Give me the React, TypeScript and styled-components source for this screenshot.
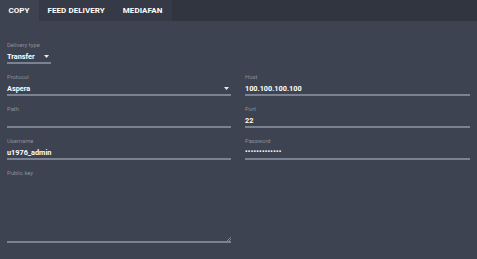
import React from "react";
import styled, { createGlobalStyle } from "styled-components";

const Global = createGlobalStyle`
  html, body { margin: 0; padding: 0; background: #3d4350; }
  body { font-family: Roboto, "Liberation Sans", sans-serif; width: 477px; height: 259px; overflow: hidden; }
`;

const Page = styled.div`
  width: 477px;
  height: 259px;
  background: #3d4350;
`;

const TabBar = styled.div`
  display: flex;
  height: 21px;
  background: #30353f;
`;

const Tab = styled.div<{ $active?: boolean }>`
  display: flex;
  align-items: center;
  padding: 0 9.5px 0 8.5px;
  background: ${(p) => (p.$active ? "#3d4350" : "#353a46")};
  color: #ffffff;
  font-size: 8px;
  font-weight: 700;
  letter-spacing: 0.05px;
`;

const Form = styled.div`
  display: grid;
  grid-template-columns: 224px 225px;
  column-gap: 14px;
  row-gap: 8px;
  padding: 19px 7px 0 7px;
`;

const Field = styled.div<{ $width?: number; $full?: boolean }>`
  display: flex;
  flex-direction: column;
  ${(p) => (p.$width ? `width: ${p.$width}px;` : "")}
  ${(p) => (p.$full ? "grid-column: 1 / span 2;" : "")}
`;

const Label = styled.div`
  height: 11px;
  line-height: 11px;
  font-size: 5.8px;
  color: #8a909b;
`;

const Value = styled.div`
  position: relative;
  height: 11px;
  line-height: 11px;
  font-size: 7.3px;
  font-weight: 700;
  color: #ffffff;
  border-bottom: 2px solid #7b8393;
  display: flex;
  align-items: center;
  justify-content: space-between;
`;

const Dots = styled.span`
  font-size: 7px;
  letter-spacing: 0.3px;
`;

const TextArea = styled.div`
  position: relative;
  height: 62px;
  width: 224px;
  border-bottom: 2px solid #7b8393;
`;

const Caret = styled.svg`
  width: 5px;
  height: 3px;
  margin-right: 2px;
  flex: none;
`;

const Resize = styled.svg`
  position: absolute;
  right: 0;
  bottom: 0;
  width: 4px;
  height: 4px;
`;

const Arrow = () => (
  <Caret viewBox="0 0 5 3">
    <path d="M0 0 L5 0 L2.5 3 Z" fill="#e6e8ec" />
  </Caret>
);

export default function App() {
  return (
    <Page>
      <Global />
      <TabBar>
        <Tab $active>COPY</Tab>
        <Tab>FEED DELIVERY</Tab>
        <Tab>MEDIAFAN</Tab>
      </TabBar>
      <Form>
        <Field $width={44} $full>
          <Label>Delivery type</Label>
          <Value>
            Transfer
            <Arrow />
          </Value>
        </Field>
        <Field>
          <Label>Protocol</Label>
          <Value>
            Aspera
            <Arrow />
          </Value>
        </Field>
        <Field>
          <Label>Host</Label>
          <Value>100.100.100.100</Value>
        </Field>
        <Field>
          <Label>Path</Label>
          <Value />
        </Field>
        <Field>
          <Label>Port</Label>
          <Value>22</Value>
        </Field>
        <Field>
          <Label>Username</Label>
          <Value>u1976_admin</Value>
        </Field>
        <Field>
          <Label>Password</Label>
          <Value>
            <Dots>•••••••••••••</Dots>
          </Value>
        </Field>
        <Field $full>
          <Label>Public key</Label>
          <TextArea>
            <Resize viewBox="0 0 4 4">
              <path d="M0 4 L4 0 M2 4 L4 2" stroke="#9aa1ad" strokeWidth="0.7" />
            </Resize>
          </TextArea>
        </Field>
      </Form>
    </Page>
  );
}
